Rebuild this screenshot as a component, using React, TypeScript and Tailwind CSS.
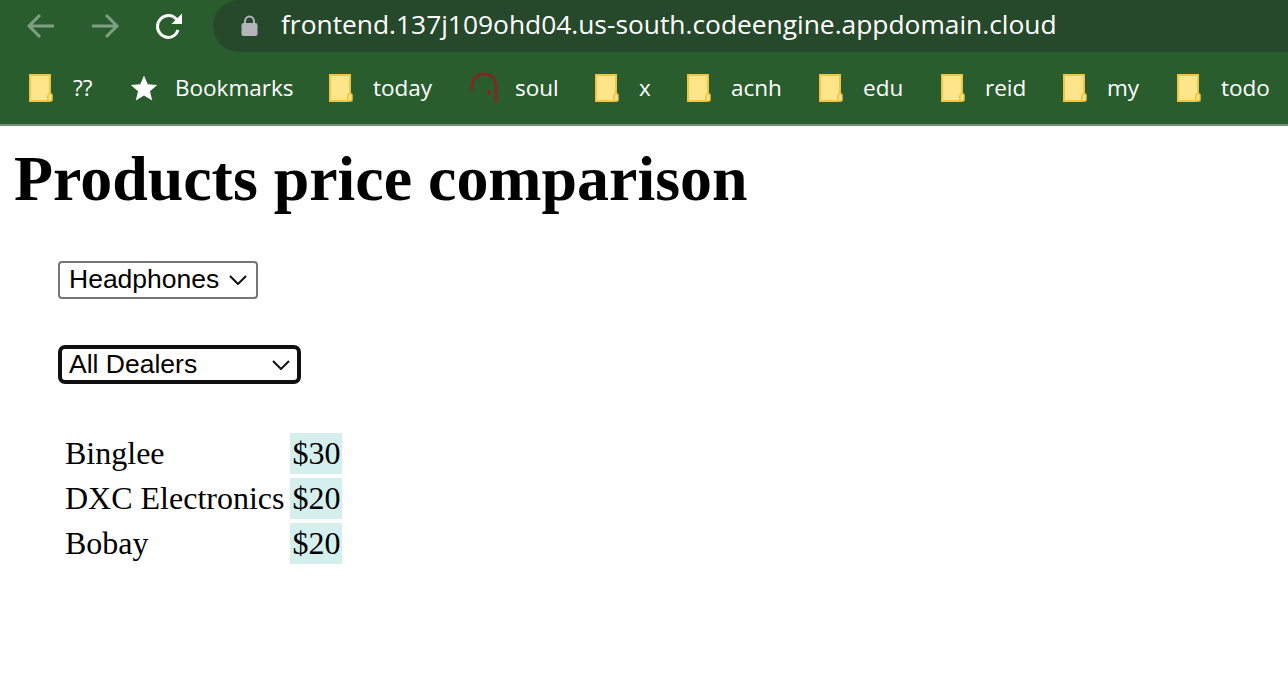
const bookmarks = [
  { label: '??', icon: 'folder', gap: 'ml-[20px]', width: 'w-[101px]' },
  { label: 'Bookmarks', icon: 'star', gap: 'ml-[17px]', width: 'w-[199px]' },
  { label: 'today', icon: 'folder', gap: 'ml-[20px]', width: 'w-[141px]' },
  { label: 'soul', icon: 'soul', gap: 'ml-[17px]', width: 'w-[125px]' },
  { label: 'x', icon: 'folder', gap: 'ml-[20px]', width: 'w-[92px]' },
  { label: 'acnh', icon: 'folder', gap: 'ml-[20px]', width: 'w-[132px]' },
  { label: 'edu', icon: 'folder', gap: 'ml-[20px]', width: 'w-[122px]' },
  { label: 'reid', icon: 'folder', gap: 'ml-[20px]', width: 'w-[122px]' },
  { label: 'my', icon: 'folder', gap: 'ml-[20px]', width: 'w-[114px]' },
  { label: 'todo', icon: 'folder', gap: 'ml-[20px]', width: 'w-[100px]' },
];

const prices = [
  { dealer: 'Binglee', price: '$30' },
  { dealer: 'DXC Electronics', price: '$20' },
  { dealer: 'Bobay', price: '$20' },
];

function FolderIcon() {
  return (
    <svg width="24" height="28" viewBox="0 0 24 28" className="shrink-0">
      <path d="M1 1H21V23H19V27H1Z" fill="#fee58a" stroke="#eec643" strokeWidth="2" />
      <rect x="19" y="20" width="4" height="7" rx="1" fill="#fee58a" stroke="#eec643" strokeWidth="1.5" />
    </svg>
  );
}

function BookmarkIcon({ icon }: { icon: string }) {
  if (icon === 'star') {
    return (
      <svg width="28" height="26" viewBox="0 0 28 26" className="shrink-0">
        <path d="M14 0.5L17.7 9.3L27.2 10.1L20 16.3L22.2 25.5L14 20.6L5.8 25.5L8 16.3L0.8 10.1L10.3 9.3Z" fill="#fff" />
      </svg>
    );
  }
  if (icon === 'soul') {
    return (
      <svg width="28" height="32" viewBox="0 0 28 32" className="shrink-0">
        <path d="M2 18V14C2 7 7 2 14 2C21 2 26 7 26 14V31" fill="none" stroke="#8f2020" strokeWidth="2.5" />
        <path d="M19 18V23" stroke="#8f2020" strokeWidth="2.5" />
      </svg>
    );
  }
  return <FolderIcon />;
}

function Chevron() {
  return (
    <svg width="18" height="10" viewBox="0 0 18 10" className="shrink-0">
      <path d="M1 1L9 9L17 1" fill="none" stroke="#111" strokeWidth="2" />
    </svg>
  );
}

export default function App() {
  return (
    <div className="h-[700px] overflow-hidden bg-white">
      <div className="bg-[#2a5d2e] font-['Open_Sans','Noto_Sans',sans-serif] text-white">
        <div className="flex h-[52px] items-center">
          <div className="flex w-[213px] items-center pl-[26px]">
            <svg width="30" height="28" viewBox="0 0 30 28" className="shrink-0">
              <path d="M28 14H3M14 3L3 14L14 25" fill="none" stroke="#7f9f83" strokeWidth="3" />
            </svg>
            <svg width="30" height="28" viewBox="0 0 30 28" className="ml-[34px] shrink-0">
              <path d="M2 14H27M16 3L27 14L16 25" fill="none" stroke="#7f9f83" strokeWidth="3" />
            </svg>
            <svg width="28" height="28" viewBox="0 0 28 28" className="ml-[35px] shrink-0">
              <path d="M23 18C21.5 22.5 17.7 25.5 13.5 25.5C7.5 25.5 2.5 20.5 2.5 14.5C2.5 8.5 7.5 3.5 13.5 3.5C17 3.5 19.8 5 21.7 7.6" fill="none" stroke="#fff" strokeWidth="3" />
              <path d="M27 1.5V12H16.5Z" fill="#fff" />
            </svg>
          </div>
          <div className="flex h-[52px] flex-1 items-center rounded-l-[26px] bg-[#27492b] pl-[28px]">
            <svg width="17" height="22" viewBox="0 0 17 22" className="shrink-0">
              <path d="M4 9V6.5C4 3.5 6 1.5 8.5 1.5C11 1.5 13 3.5 13 6.5V9" fill="none" stroke="#b3b5bb" strokeWidth="2" />
              <rect x="0.5" y="8" width="16" height="13" rx="2" fill="#b3b5bb" />
            </svg>
            <span className="mb-[4px] ml-[23px] whitespace-nowrap text-[26.35px] leading-[48px]">
              frontend.137j109ohd04.us-south.codeengine.appdomain.cloud
            </span>
          </div>
        </div>
        <div className="flex h-[72px] items-center pl-[29px]">
          {bookmarks.map((item) => (
            <div key={item.label} className={`flex shrink-0 items-center ${item.width}`}>
              <BookmarkIcon icon={item.icon} />
              <span className={`${item.gap} whitespace-nowrap text-[22.5px] leading-[30px]`}>{item.label}</span>
            </div>
          ))}
        </div>
        <div className="h-[2px] bg-[#6f9273]" />
      </div>

      <div className="font-['Liberation_Serif',serif] text-black">
        <h1 className="pb-px pl-[14px] pt-[13px] text-[63.9px] font-bold leading-[80px]">Products price comparison</h1>

        <div className="ml-[58px] mt-[41px] flex flex-col items-start font-['Liberation_Sans',sans-serif] text-[26.5px] leading-[30px]">
          <div className="flex h-[38px] w-[200px] items-center justify-between rounded-[4px] border-2 border-[#767676] px-[9px]">
            <span className="mb-[2px]">Headphones</span>
            <Chevron />
          </div>
          <div className="mt-[46px] flex h-[39px] w-[243px] items-center justify-between rounded-[7px] border-4 border-[#101010] px-[7px]">
            <span className="mb-[2px]">All Dealers</span>
            <Chevron />
          </div>
        </div>

        <div className="ml-[64px] mt-[49px] grid w-fit grid-cols-[auto_52px] gap-x-[5px] gap-y-[4px] text-[32px] leading-[41px]">
          {prices.map((row) => (
            <div key={row.dealer} className="contents">
              <div className="whitespace-nowrap pl-px">{row.dealer}</div>
              <div className="bg-[#d5eeee] pl-[3px]">{row.price}</div>
            </div>
          ))}
        </div>
      </div>
    </div>
  );
}
